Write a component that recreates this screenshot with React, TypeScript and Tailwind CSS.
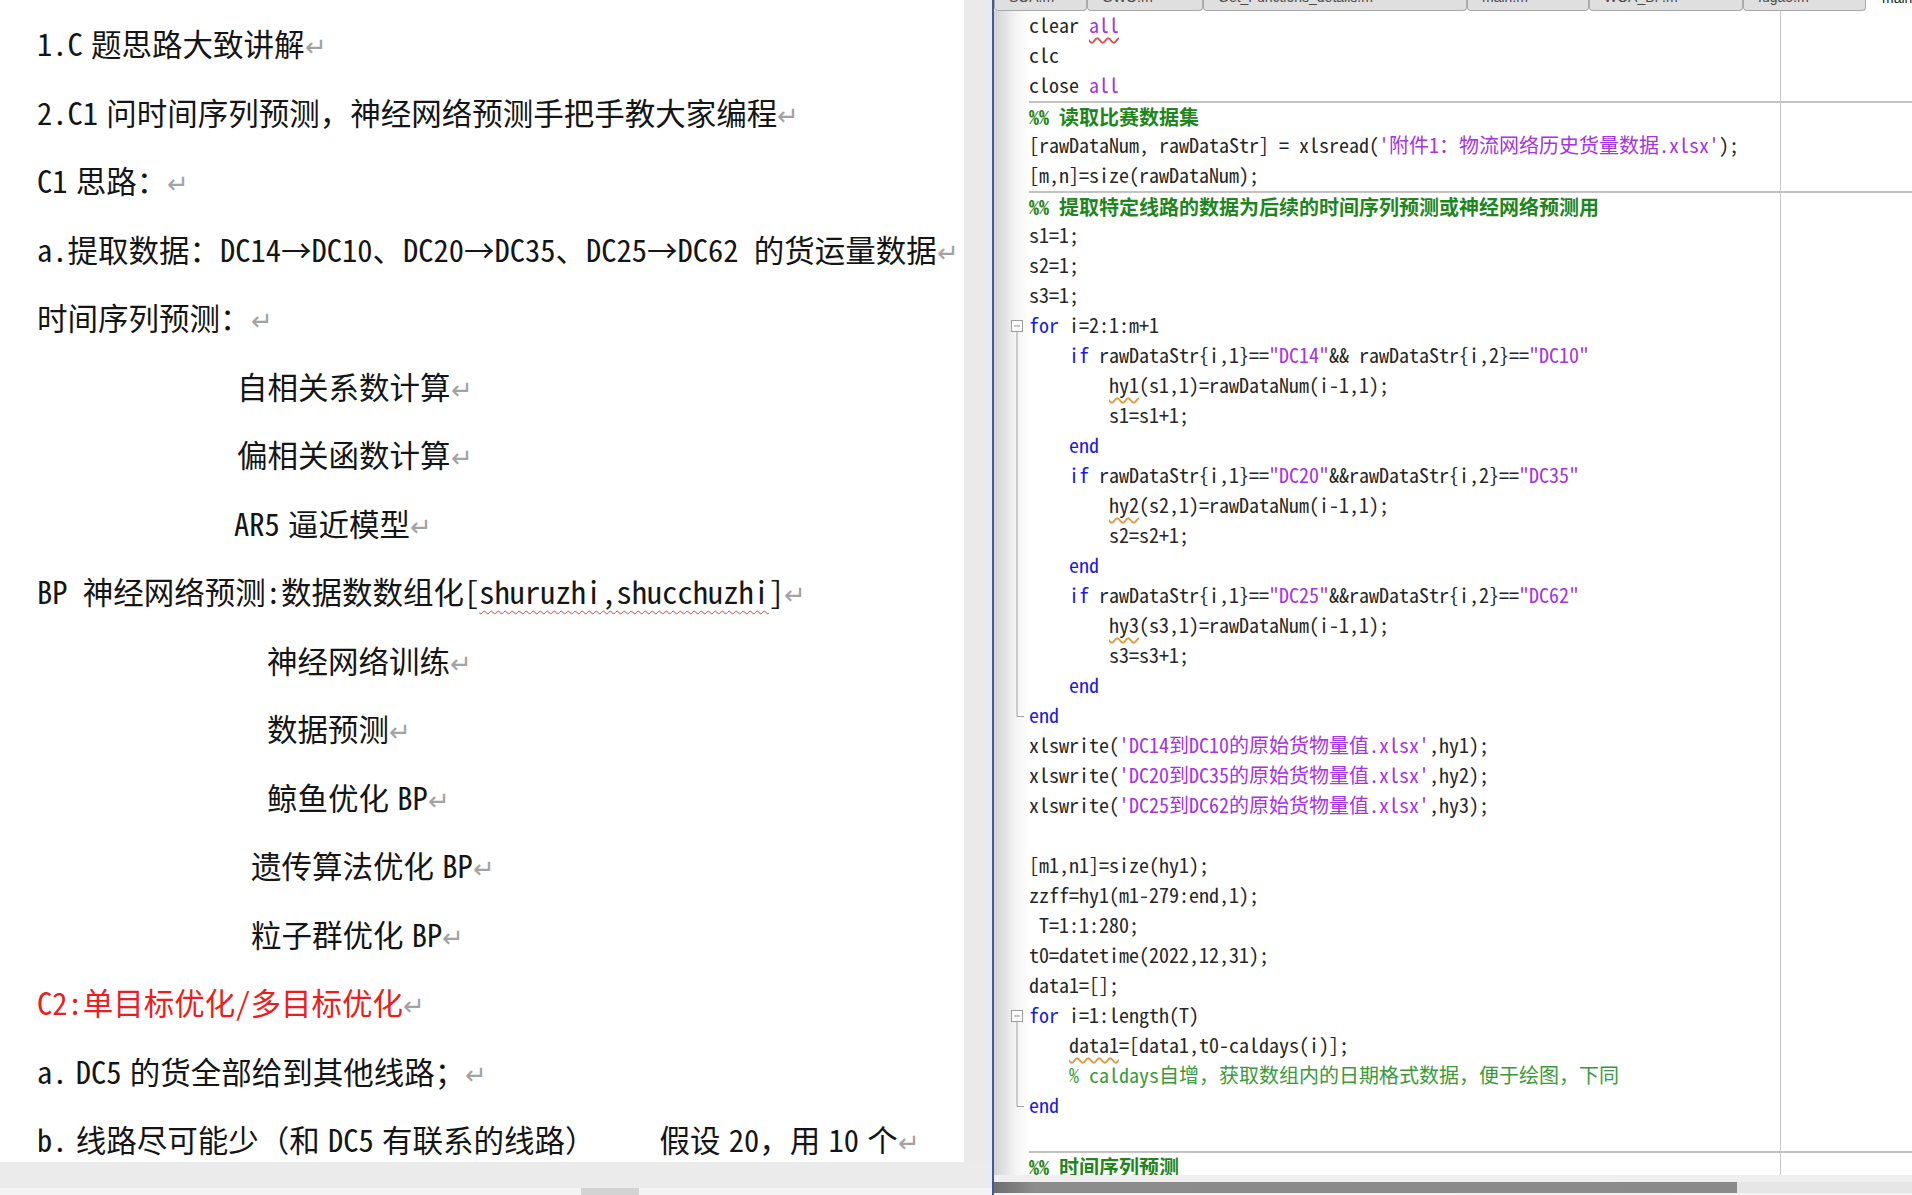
import React from 'react';

type Kind = 'n' | 'k' | 's' | 'c' | 'h' | 'w' | 'a';
type Seg = [string, Kind];
type Line = { segs: Seg[]; fold?: 's' | 'm' | 'e'; cell?: boolean };

const code: Line[] = [
  { segs: [['clear ', 'n'], ['all', 'a']] },
  { segs: [['clc', 'n']] },
  { segs: [['close ', 'n'], ['all', 's']] },
  { cell: true, segs: [['%% 读取比赛数据集', 'h']] },
  { segs: [['[rawDataNum, rawDataStr] = xlsread(', 'n'], ["'附件1：物流网络历史货量数据.xlsx'", 's'], [');', 'n']] },
  { segs: [['[m,n]=size(rawDataNum);', 'n']] },
  { cell: true, segs: [['%% 提取特定线路的数据为后续的时间序列预测或神经网络预测用', 'h']] },
  { segs: [['s1=1;', 'n']] },
  { segs: [['s2=1;', 'n']] },
  { segs: [['s3=1;', 'n']] },
  { fold: 's', segs: [['for', 'k'], [' i=2:1:m+1', 'n']] },
  { fold: 'm', segs: [['    ', 'n'], ['if', 'k'], [' rawDataStr{i,1}==', 'n'], ['"DC14"', 's'], ['&& rawDataStr{i,2}==', 'n'], ['"DC10"', 's']] },
  { fold: 'm', segs: [['        ', 'n'], ['hy1', 'w'], ['(s1,1)=rawDataNum(i-1,1);', 'n']] },
  { fold: 'm', segs: [['        s1=s1+1;', 'n']] },
  { fold: 'm', segs: [['    ', 'n'], ['end', 'k']] },
  { fold: 'm', segs: [['    ', 'n'], ['if', 'k'], [' rawDataStr{i,1}==', 'n'], ['"DC20"', 's'], ['&&rawDataStr{i,2}==', 'n'], ['"DC35"', 's']] },
  { fold: 'm', segs: [['        ', 'n'], ['hy2', 'w'], ['(s2,1)=rawDataNum(i-1,1);', 'n']] },
  { fold: 'm', segs: [['        s2=s2+1;', 'n']] },
  { fold: 'm', segs: [['    ', 'n'], ['end', 'k']] },
  { fold: 'm', segs: [['    ', 'n'], ['if', 'k'], [' rawDataStr{i,1}==', 'n'], ['"DC25"', 's'], ['&&rawDataStr{i,2}==', 'n'], ['"DC62"', 's']] },
  { fold: 'm', segs: [['        ', 'n'], ['hy3', 'w'], ['(s3,1)=rawDataNum(i-1,1);', 'n']] },
  { fold: 'm', segs: [['        s3=s3+1;', 'n']] },
  { fold: 'm', segs: [['    ', 'n'], ['end', 'k']] },
  { fold: 'e', segs: [['end', 'k']] },
  { segs: [['xlswrite(', 'n'], ["'DC14到DC10的原始货物量值.xlsx'", 's'], [',hy1);', 'n']] },
  { segs: [['xlswrite(', 'n'], ["'DC20到DC35的原始货物量值.xlsx'", 's'], [',hy2);', 'n']] },
  { segs: [['xlswrite(', 'n'], ["'DC25到DC62的原始货物量值.xlsx'", 's'], [',hy3);', 'n']] },
  { segs: [] },
  { segs: [['[m1,n1]=size(hy1);', 'n']] },
  { segs: [['zzff=hy1(m1-279:end,1);', 'n']] },
  { segs: [[' T=1:1:280;', 'n']] },
  { segs: [['t0=datetime(2022,12,31);', 'n']] },
  { segs: [['data1=[];', 'n']] },
  { fold: 's', segs: [['for', 'k'], [' i=1:length(T)', 'n']] },
  { fold: 'm', segs: [['    ', 'n'], ['data1', 'w'], ['=[data1,t0-caldays(i)];', 'n']] },
  { fold: 'm', segs: [['    ', 'n'], ['% caldays自增，获取数组内的日期格式数据，便于绘图，下同', 'c']] },
  { fold: 'e', segs: [['end', 'k']] },
  { segs: [] },
  { cell: true, segs: [['%% 时间序列预测', 'h']] },
];

const kindClass: Record<Kind, string> = {
  n: 'text-[#262626]',
  k: 'text-[#1a1ae0]',
  s: 'text-[#a532e6]',
  c: 'text-[#3a9a3a]',
  h: 'text-[#1d861d] font-bold',
  w: 'text-[#262626] underline decoration-wavy decoration-[#e39a3c] underline-offset-4',
  a: 'text-[#a532e6] underline decoration-wavy decoration-[#e05050] underline-offset-4',
};

function Fold({ type }: { type?: 's' | 'm' | 'e' }) {
  return (
    <svg width="35" height="30" className="shrink-0">
      {type === 's' && (
        <>
          <rect x="17.5" y="9.5" width="11" height="11" fill="#fff" stroke="#9c9c9c" />
          <line x1="20" y1="15" x2="26" y2="15" stroke="#8a8a8a" />
          <line x1="23" y1="21" x2="23" y2="30" stroke="#a0a0a0" />
        </>
      )}
      {type === 'm' && <line x1="23" y1="0" x2="23" y2="30" stroke="#a0a0a0" />}
      {type === 'e' && <path d="M23 0 V15.5 H30" fill="none" stroke="#a0a0a0" />}
    </svg>
  );
}

const tabs = [
  { name: 'SOA.m', w: 'w-[93px]' },
  { name: 'GWO.m', w: 'w-[116px]' },
  { name: 'Get_Functions_details.m', w: 'w-[264px]' },
  { name: 'main.m', w: 'w-[122px]' },
  { name: 'WOA_BP.m', w: 'w-[154px]' },
  { name: 'fugao.m', w: 'w-[123px]' },
];

const cjk = "font-['Noto_Sans_Mono_CJK_SC','Liberation_Sans_Narrow','Noto_Sans_CJK_SC',sans-serif]";

function Mark() {
  return <span className="text-[#a3a3a3] text-[26px]">↵</span>;
}

function P({
  indent = '',
  red = false,
  wide = false,
  children,
}: {
  indent?: string;
  red?: boolean;
  wide?: boolean;
  children: React.ReactNode;
}) {
  return (
    <div
      className={`h-[68.5px] leading-[68.5px] whitespace-pre ${indent} ${red ? 'text-[#ee1c1c]' : 'text-[#151515]'} ${
        wide ? '' : '[word-spacing:-7px]'
      }`}
    >
      {children}
      <Mark />
    </div>
  );
}

export default function App() {
  return (
    <div className={`flex h-[1195px] w-[1912px] overflow-hidden bg-white ${cjk}`}>
      {/* Word document */}
      <div className="flex w-[992px] shrink-0 flex-col bg-[#ebeaea]">
        <div className="h-[1162px] w-[964px] overflow-hidden bg-white pl-[37px] pt-[9px] text-[30.5px] font-light">
          <P>1.C 题思路大致讲解</P>
          <P>2.C1 问时间序列预测，神经网络预测手把手教大家编程</P>
          <P>C1 思路：</P>
          <P wide>a.提取数据：DC14→DC10、DC20→DC35、DC25→DC62 的货运量数据</P>
          <P>时间序列预测：</P>
          <P indent="pl-[200px]">自相关系数计算</P>
          <P indent="pl-[200px]">偏相关函数计算</P>
          <P indent="pl-[197px]">AR5 逼近模型</P>
          <P wide>
            BP 神经网络预测:数据数数组化[
            <span className="underline decoration-wavy decoration-[#e23b3b] decoration-1 underline-offset-[6px]">shuruzhi,shucchuzhi</span>]
          </P>
          <P indent="pl-[230px]">神经网络训练</P>
          <P indent="pl-[230px]">数据预测</P>
          <P indent="pl-[230px]">鲸鱼优化 BP</P>
          <P indent="pl-[214px]">遗传算法优化 BP</P>
          <P indent="pl-[214px]">粒子群优化 BP</P>
          <P red>C2:单目标优化/多目标优化</P>
          <P>a. DC5 的货全部给到其他线路；</P>
          <P>
            b. 线路尽可能少（和 DC5 有联系的线路）
            <span className="inline-block w-[64px]" />
            假设 20，用 10 个
          </P>
        </div>
        <div className="h-[26px] bg-[#ebebeb]" />
        <div className="flex h-[7px] bg-[#f4f4f4]">
          <div className="ml-[581px] w-[58px] bg-[#d3d3d3]" />
        </div>
      </div>

      <div className="w-[2px] shrink-0 bg-[#3a5ba7]" />

      {/* MATLAB editor */}
      <div className="flex min-w-0 flex-1 flex-col">
        <div className="flex h-[11px] shrink-0 bg-white">
          {tabs.map((t) => (
            <div
              key={t.name}
              className={`${t.w} flex h-[11px] items-end justify-between overflow-hidden rounded-b-[4px] border-x border-b border-[#a9a9a9] bg-[#dfdfdf] px-[14px] pb-[3px] text-[14px] leading-[20px] text-[#4a4a4a] font-['Liberation_Sans',sans-serif]`}
            >
              <span>{t.name}</span>
              <span className="text-[#8a8a8a]">×</span>
            </div>
          ))}
          <div className="flex h-[11px] flex-1 items-end overflow-hidden pb-[3px] pl-[16px] text-[14px] leading-[20px] text-[#222] font-['Liberation_Sans',sans-serif]">
            main2.m
          </div>
        </div>

        <div className="relative min-h-0 flex-1 overflow-hidden bg-[linear-gradient(90deg,#d2d2d2_0px,#f4f4f4_22px,#ffffff_36px)]">
          <div className="absolute bottom-0 left-[786px] top-0 w-px bg-[#c8c8c8]" />
          <div className="relative flex flex-col text-[20px]">
            {code.map((l, i) => (
              <div key={i} className="flex h-[30px]">
                <Fold type={l.fold} />
                <div
                  className={`h-[30px] flex-1 whitespace-pre leading-[28px] ${
                    l.cell ? 'border-t-2 border-[#c3c3c3]' : ''
                  }`}
                >
                  {l.segs.map((s, j) => (
                    <span key={j} className={kindClass[s[1]]}>
                      {s[0]}
                    </span>
                  ))}
                </div>
              </div>
            ))}
          </div>
        </div>

        <div className="h-[7px] shrink-0 bg-[#efefef]" />
        <div className="flex h-[11px] shrink-0 bg-[#e6e6e6]">
          <div className="w-[743px] bg-[linear-gradient(90deg,#6e6e6e,#8c8c8c_40px,#8a8a8a)]" />
        </div>
        <div className="h-[2px] shrink-0 bg-[#f2f2f2]" />
      </div>
    </div>
  );
}
